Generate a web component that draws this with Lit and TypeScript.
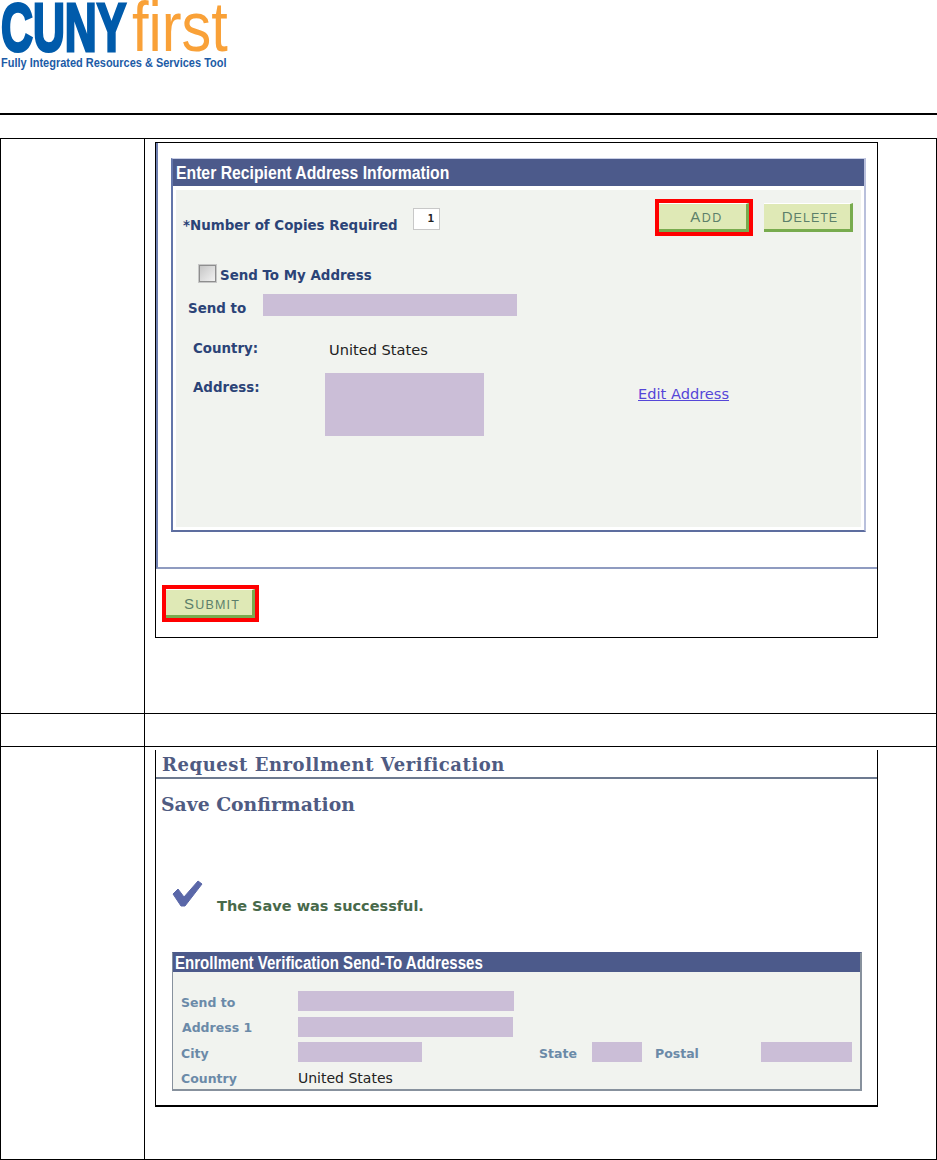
import { LitElement, html, css } from "lit";
import { customElement } from "lit/decorators.js";

@customElement("app-root")
export class AppRoot extends LitElement {
  static styles = css`
    :host { display: block; width: 937px; height: 1160px; background: #fff; overflow: hidden; font-family: "DejaVu Sans", sans-serif; }
    .logo { height: 113px; border-bottom: 2px solid #000; box-sizing: content-box; }
    .logo-word { display: flex; height: 54px; align-items: flex-end; }
    .cuny { font: 700 68px/54px "Liberation Sans", sans-serif; color: #005bab; -webkit-text-stroke: 3px #005bab; transform: translateX(1px) scaleX(0.65); transform-origin: 0 100%; width: 132px; flex: none; white-space: nowrap; }
    .first { font: 400 70px/54px "Liberation Sans", sans-serif; color: #f9a138; transform: scaleX(0.85); transform-origin: 0 100%; white-space: nowrap; }
    .tag { font: 700 13.5px/13px "Liberation Sans", sans-serif; color: #1c5ba6; margin: 2px 0 0 1px; white-space: nowrap; transform: scaleX(0.813); transform-origin: 0 0; }

    .table { margin-top: 23px; width: 937px; height: 1022px; display: grid; grid-template-columns: 143px 1fr; grid-template-rows: 574px 33px 1fr; border: 1px solid #000; box-sizing: border-box; }
    .cell { border-left: 1px solid #000; }
    .first-col { border-left: 0; }
    .sep { border-top: 1px solid #000; }
    .pad { padding: 3px 0 0 10px; }

    .shot1 { width: 723px; height: 496px; border: 1px solid #000; display: flex; flex-direction: column; box-sizing: border-box; background: #fff; }
    .inner { height: 426px; flex: none; border-bottom: 2px solid #8f9bc0; border-left: 2px solid #6f7fb0; box-sizing: border-box; padding: 15px 11px 0 13px; }
    .panel { height: 374px; border-style: solid; border-color: #c9cfe6 #b9c0dc #5d6d9f #6476aa; border-width: 1px 2px 2px 2px; display: flex; flex-direction: column; box-sizing: border-box; }
    .hdr { height: 27px; background: #4c5a8b; color: #fff; font: 700 17.5px/29px "Liberation Sans", sans-serif; padding-left: 3px; flex: none; box-sizing: border-box; white-space: nowrap; overflow: hidden; }
    .hdr span { display: inline-block; transform: scaleX(0.9); transform-origin: 0 50%; }
    .pbody { flex: 1; margin: 4px 3px 3px 3px; background: #f1f3ef; display: flex; flex-direction: column; }
    .row { display: flex; align-items: flex-start; flex: none; }

    .lab { font: 700 13.4px/16px "DejaVu Sans", sans-serif; color: #2b4377; white-space: nowrap; box-sizing: border-box; }
    .val { font: 400 14.6px/16px "DejaVu Sans", sans-serif; color: #222; white-space: nowrap; }
    .box { background: #cbbed7; flex: none; }
    .input { width: 27px; height: 22px; background: #fff; border: 1px solid #c8c8c8; box-sizing: border-box; font: 700 11px/20px "DejaVu Sans Mono", monospace; text-align: right; padding-right: 5px; color: #222; }
    .check { width: 17px; height: 17px; background: linear-gradient(135deg, #c6c6c6, #f2f2f2); border: 1px solid #8e8e8e; outline: 1px solid #c7c7c7; box-sizing: border-box; flex: none; }
    .btn { position: relative; background: #dfe9b6; border-right: 3px solid #78ab4e; border-bottom: 3px solid #78ab4e; border-top: 1px solid #fff; box-sizing: border-box; color: #5c7f6a; font: 400 12.5px/25px "Liberation Sans", sans-serif; letter-spacing: 1.5px; text-align: center; flex: none; }
    .btn .big { font-size: 15px; }
    .red::after { content: ""; position: absolute; inset: -5px -7px -7px -4px; border: 4px solid #f00; box-sizing: border-box; }
    .link { font: 400 14.6px/16px "DejaVu Sans", sans-serif; color: #5546d8; text-decoration: underline; white-space: nowrap; }

    .r-a { margin-top: 13px; }
    .copies { width: 237px; padding-left: 7px; margin-top: 15px; }
    .in-pos { margin-top: 5px; }
    .add { margin-left: 219px; width: 90px; height: 29px; padding-left: 8px; }
    .del { margin-left: 15px; width: 89px; height: 29px; padding-left: 6px; letter-spacing: 1px; }
    .r-b { margin: 31px 0 0 23px; }
    .r-b .lab { margin: 3px 0 0 4px; }
    .r-c { margin-top: 10px; }
    .sendto { width: 87px; padding-left: 12px; margin-top: 7px; }
    .b-send { width: 254px; height: 22px; }
    .r-d { margin-top: 23px; }
    .wide { width: 153px; padding-left: 17px; margin-top: 1px; }
    .val-d { margin-top: 2px; }
    .r-e { margin-top: 15px; }
    .addr { width: 149px; padding-left: 17px; margin-top: 7px; }
    .b-addr { width: 159px; height: 63px; }
    .edit { margin: 13px 0 0 154px; }

    .submit-row { flex: 1; display: flex; align-items: flex-start; padding: 20px 0 0 10px; }
    .submit { width: 89px; height: 29px; padding-left: 6px; letter-spacing: 1.2px; line-height: 27px; }

    .shot2 { width: 723px; height: 357px; border-left: 1px solid #000; border-right: 1px solid #000; border-bottom: 2px solid #000; box-sizing: border-box; display: flex; flex-direction: column; }
    .h1 { font: 700 18px/22px "DejaVu Serif", serif; letter-spacing: 0.55px; color: #4f5b82; padding: 4px 0 0 6px; height: 29px; box-sizing: border-box; border-bottom: 2px solid #6d7a90; white-space: nowrap; flex: none; }
    .h2 { font: 700 18.8px/24px "DejaVu Serif", serif; color: #4f5b82; padding: 13px 0 0 5px; white-space: nowrap; flex: none; }
    .ok-row { margin: 62px 0 0 14px; }
    .ok-row svg { flex: none; display: block; }
    .ok { color: #48694a; font: 700 14.5px/16px "DejaVu Sans", sans-serif; margin: 20px 0 0 13px; white-space: nowrap; }

    .panel2 { margin: 38px 0 0 16px; width: 690px; height: 139px; border-style: solid; border-color: #4c5a8b #87919d #87919d #87919d; border-width: 1px 2px 2px 1px; box-sizing: border-box; background: #f1f3ef; flex: none; }
    .hdr2 { height: 19px; background: #4c5a8b; color: #fff; font: 700 17.5px/21px "Liberation Sans", sans-serif; padding-left: 2px; box-sizing: border-box; white-space: nowrap; overflow: hidden; }
    .hdr2 span { display: inline-block; transform: scaleX(0.86); transform-origin: 0 50%; }
    .lab2 { font: 700 12.5px/16px "DejaVu Sans", sans-serif; color: #6b8aa8; white-space: nowrap; box-sizing: border-box; flex: none; }
    .col { width: 125px; padding-left: 8px; }
    .col-b { padding-left: 9px; }
    .m3 { margin-top: 3px; }
    .m4 { margin-top: 4px; }
    .m1 { margin-top: 1px; }
    .h20 { height: 20px; }
    .w216 { width: 216px; }
    .w215 { width: 215px; }
    .w124 { width: 124px; }
    .w50 { width: 50px; }
    .w91 { width: 91px; }
    .p1 { margin-top: 19px; }
    .p2 { margin-top: 6px; }
    .p3 { margin-top: 5px; }
    .p4 { margin-top: 8px; }
    .state { width: 53px; margin: 4px 0 0 117px; }
    .postal { width: 106px; margin: 4px 0 0 13px; }
    .val-us { font-size: 14px; }
  `;

  render() {
    return html`
      <div class="logo">
        <div class="logo-word"><div class="cuny">CUNY</div><div class="first">first</div></div>
        <div class="tag">Fully Integrated Resources &amp; Services Tool</div>
      </div>
      <div class="table">
        <div class="cell first-col"></div>
        <div class="cell pad">
          <div class="shot1">
            <div class="inner">
              <div class="panel">
                <div class="hdr"><span>Enter Recipient Address Information</span></div>
                <div class="pbody">
                  <div class="row r-a">
                    <div class="lab copies">*Number of Copies Required</div>
                    <div class="input in-pos">1</div>
                    <div class="btn add red"><span class="big">A</span>DD</div>
                    <div class="btn del"><span class="big">D</span>ELETE</div>
                  </div>
                  <div class="row r-b">
                    <div class="check"></div>
                    <div class="lab">Send To My Address</div>
                  </div>
                  <div class="row r-c">
                    <div class="lab sendto">Send to</div>
                    <div class="box b-send"></div>
                  </div>
                  <div class="row r-d">
                    <div class="lab wide">Country:</div>
                    <div class="val val-d">United States</div>
                  </div>
                  <div class="row r-e">
                    <div class="lab addr">Address:</div>
                    <div class="box b-addr"></div>
                    <div class="link edit">Edit Address</div>
                  </div>
                </div>
              </div>
            </div>
            <div class="submit-row">
              <div class="btn submit red"><span class="big">S</span>UBMIT</div>
            </div>
          </div>
        </div>
        <div class="cell first-col sep"></div>
        <div class="cell sep"></div>
        <div class="cell first-col sep"></div>
        <div class="cell sep pad">
          <div class="shot2">
            <div class="h1">Request Enrollment Verification</div>
            <div class="h2">Save Confirmation</div>
            <div class="row ok-row">
              <svg width="34" height="36" viewBox="0 0 34 36">
                <path d="M3 16 L8 11 L14 19 L28 3 L32 6 L15 28 L11 28 Z" fill="#5a67a8" stroke="#5a67a8" stroke-width="1" stroke-linejoin="round"/>
              </svg>
              <div class="ok">The Save was successful.</div>
            </div>
            <div class="panel2">
              <div class="hdr2"><span>Enrollment Verification Send-To Addresses</span></div>
              <div class="row p1">
                <div class="lab2 col m4">Send to</div>
                <div class="box h20 w216"></div>
              </div>
              <div class="row p2">
                <div class="lab2 col col-b m3">Address 1</div>
                <div class="box h20 w215"></div>
              </div>
              <div class="row p3">
                <div class="lab2 col m4">City</div>
                <div class="box h20 w124"></div>
                <div class="lab2 state">State</div>
                <div class="box h20 w50"></div>
                <div class="lab2 postal">Postal</div>
                <div class="box h20 w91"></div>
              </div>
              <div class="row p4">
                <div class="lab2 col m1">Country</div>
                <div class="val val-us">United States</div>
              </div>
            </div>
          </div>
        </div>
      </div>
    `;
  }
}
